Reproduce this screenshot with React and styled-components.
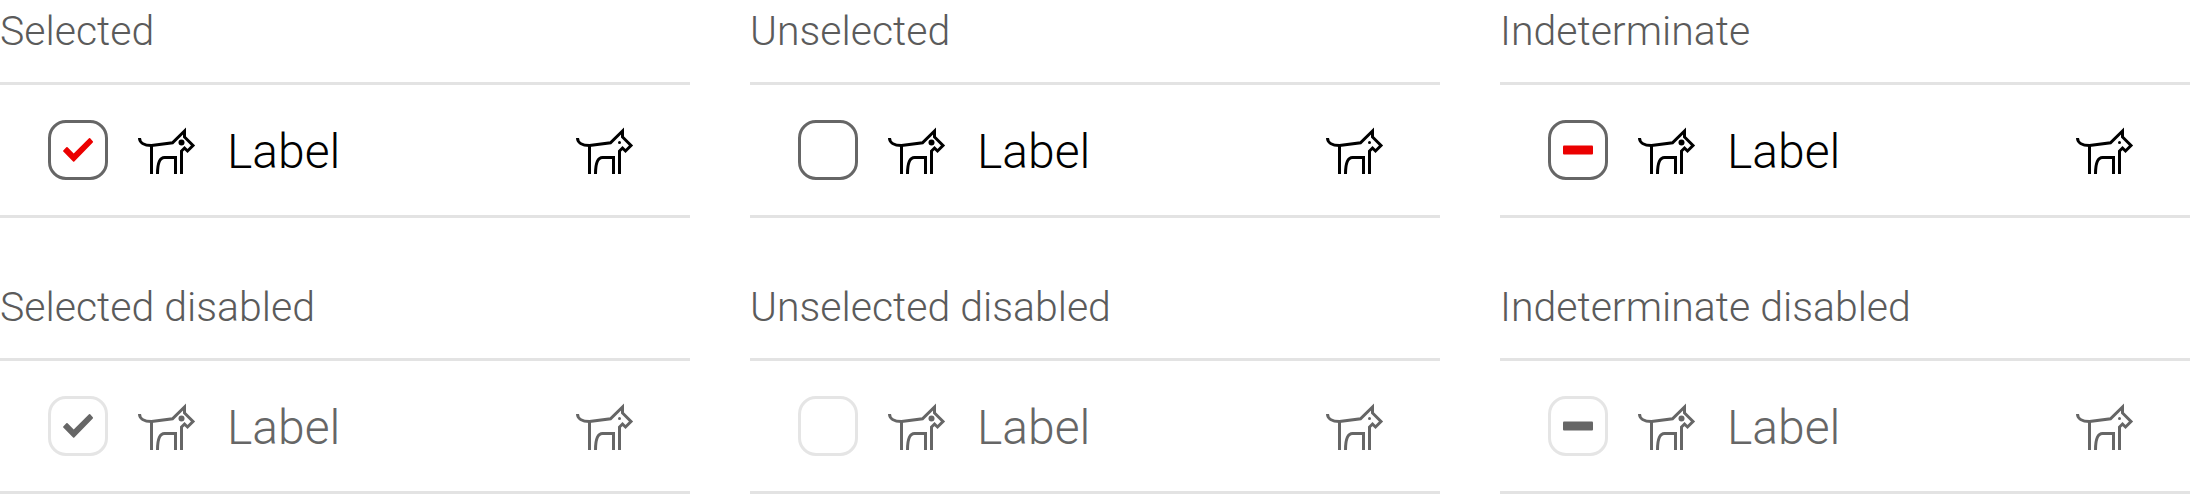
import React, { useEffect, useRef } from "react";
import styled, { createGlobalStyle } from "styled-components";

const GlobalStyle = createGlobalStyle`
  *, *::before, *::after { box-sizing: border-box; }
  body {
    margin: 0;
    background: #fff;
    font-family: Roboto, "Liberation Sans", sans-serif;
    font-weight: 300;
  }
`;

const Page = styled.main`
  display: grid;
  grid-template-columns: repeat(3, minmax(0, 1fr));
  gap: 58px 60px;
`;

const Caption = styled.h2`
  margin: 0 0 20px;
  font-size: 41px;
  line-height: 62px;
  font-weight: 300;
  white-space: nowrap;
  color: #5b5b5b;
`;

const Row = styled.label`
  display: flex;
  align-items: center;
  height: 136px;
  padding: 0 55px 0 48px;
  border: solid #e3e3e3;
  border-width: 3px 0;
  color: ${(p) => (p.$disabled ? "#666" : "#000")};
`;

const Box = styled.span`
  display: grid;
  flex: none;
  margin-right: 29px;

  & > * {
    grid-area: 1 / 1;
  }
`;

const Checkbox = styled.input`
  appearance: none;
  width: 60px;
  height: 60px;
  margin: 0;
  border: 3px solid #666;
  border-radius: 18px;
  background: #fff;

  &:disabled {
    border-color: #e5e5e5;
  }
`;

const Mark = styled.svg`
  width: 60px;
  height: 60px;
  pointer-events: none;
  fill: ${(p) => (p.$disabled ? "#666" : "#eb0000")};
`;

const Icon = styled.svg`
  flex: none;
  width: 60px;
  height: 60px;
  fill: none;
  stroke: currentColor;
  stroke-width: 3;
  stroke-miterlimit: 10;
`;

const LabelText = styled.span`
  flex: 1;
  margin-left: 30px;
  padding-top: 4px;
  font-size: 48px;
  line-height: 60px;
`;

function Dog({ eye }) {
  return (
    <Icon viewBox="0 0 60 60" aria-hidden="true">
      <path d="M2.5 18C2.5 22.5 7 25.5 14.5 25.5L35.5 22.8L47.5 11V17L56 25.5L50.5 31L47.5 28L44.5 31V54" />
      <path d="M14.5 25.5V54" />
      <path d="M20.5 54C20.5 45 22 37.5 27.5 37.5H38.5V54" />
      <circle cx="44.5" cy="22.5" r={eye} fill="currentColor" stroke="none" />
    </Icon>
  );
}

function Item({ caption, state, disabled }) {
  const input = useRef(null);
  useEffect(() => {
    input.current.indeterminate = state === "indeterminate";
  }, [state]);

  return (
    <section>
      <Caption>{caption}</Caption>
      <Row $disabled={disabled}>
        <Box>
          <Checkbox ref={input} type="checkbox" defaultChecked={state === "selected"} disabled={disabled} />
          <Mark $disabled={disabled} viewBox="0 0 60 60" aria-hidden="true">
            {state === "selected" && (
              <path d="M15.3 31.6Q14.7 31 15.3 30.4L18.3 27.2Q19 26.6 19.6 27.2L25.7 33.5L41 18.2Q41.6 17.6 42.2 18.2L44.8 21.2Q45.3 21.8 44.8 22.4L26.3 41.6Q25.7 42.1 25.1 41.6Z" />
            )}
            {state === "indeterminate" && <rect x="15" y="25.5" width="30" height="9" rx="1" />}
          </Mark>
        </Box>
        <Dog eye={3} />
        <LabelText>Label</LabelText>
        <Dog eye={1.5} />
      </Row>
    </section>
  );
}

const items = [
  { caption: "Selected", state: "selected", disabled: false },
  { caption: "Unselected", state: "unselected", disabled: false },
  { caption: "Indeterminate", state: "indeterminate", disabled: false },
  { caption: "Selected disabled", state: "selected", disabled: true },
  { caption: "Unselected disabled", state: "unselected", disabled: true },
  { caption: "Indeterminate disabled", state: "indeterminate", disabled: true },
];

export default function App() {
  return (
    <>
      <GlobalStyle />
      <Page>
        {items.map((item) => (
          <Item key={item.caption} {...item} />
        ))}
      </Page>
    </>
  );
}
